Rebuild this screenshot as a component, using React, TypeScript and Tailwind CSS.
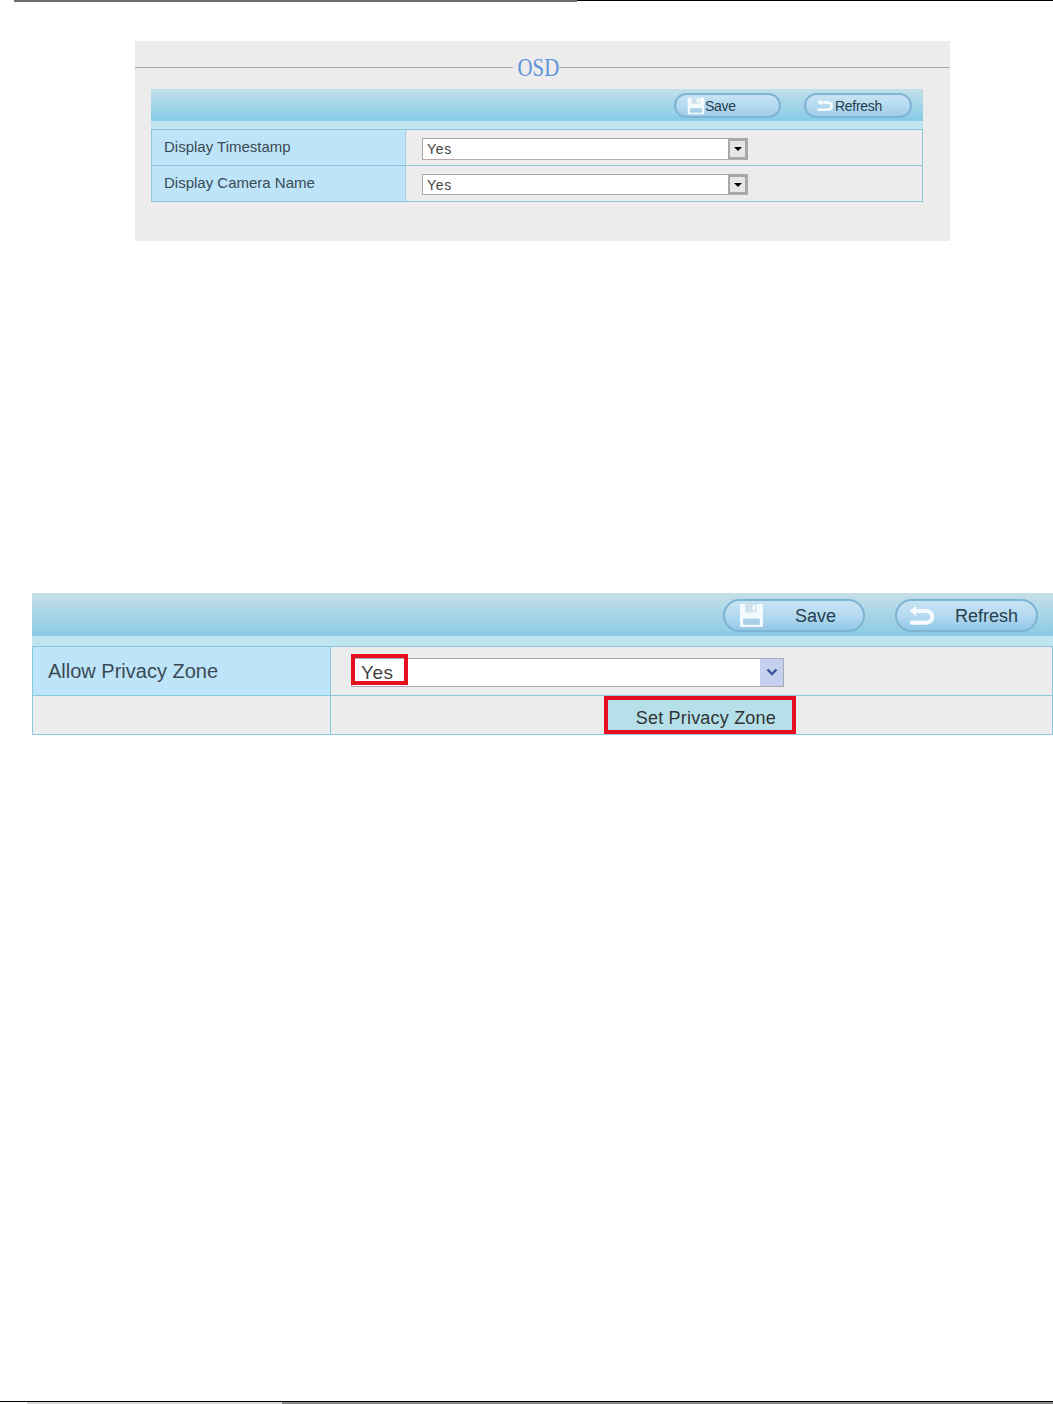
const sans = "font-['Liberation_Sans',Arial,sans-serif]";

function SaveIcon({ className }: { className: string }) {
  return (
    <svg viewBox="0 0 24 24" className={className}>
      <path d="M1 1h22v22H1z" fill="#f4fafd" />
      <path d="M6 1h11v8H6z" fill="#cfe3ee" />
      <path d="M13 2h3v5h-3z" fill="#f4fafd" />
      <path d="M4 15h16v6H4z" fill="#a9cfe4" />
    </svg>
  );
}

function RefreshIcon({ className }: { className: string }) {
  return (
    <svg viewBox="0 0 36 24" fill="none" className={className}>
      <path d="M9 6h15c10 0 10 14 0 14H7" stroke="#f4fafd" strokeWidth="5" strokeLinecap="round" />
      <path d="M12 0 4 6l8 6z" fill="#f4fafd" />
    </svg>
  );
}

function SmallButton({ label, icon, className }: { label: string; icon: React.ReactNode; className: string }) {
  return (
    <div className={`flex h-[25px] items-center rounded-full border-2 border-[#7fb3d3] bg-gradient-to-b from-[#c9e4f3] via-[#b4daf0] to-[#9fcdea] text-[14px] leading-none tracking-[-0.3px] text-[#26404f] ${className}`}>
      {icon}
      <span>{label}</span>
    </div>
  );
}

function LargeButton({ label, icon, className }: { label: string; icon: React.ReactNode; className: string }) {
  return (
    <div className={`flex h-[33px] items-center rounded-full border-2 border-[#7fb3d3] bg-gradient-to-b from-[#c9e4f3] via-[#b4daf0] to-[#93c8e8] text-[18px] leading-none text-[#26404f] ${className}`}>
      {icon}
      <span>{label}</span>
    </div>
  );
}

function SmallSelect({ className }: { className: string }) {
  return (
    <div className={`flex w-[326px] items-stretch border border-[#a9a9a9] border-b-[#b9a9a9] bg-white ${className}`}>
      <span className="flex-1 pl-[4px] text-[14px] leading-[20px] tracking-[0.7px] text-[#444]">Yes</span>
      <div className="flex w-[19px] items-center justify-center border-2 border-[#a8a8a8] bg-[#e6e6e6]">
        <div className="h-0 w-0 border-x-[4px] border-t-[4px] border-x-transparent border-t-black" />
      </div>
    </div>
  );
}

function OsdRow({ label, last }: { label: string; last?: boolean }) {
  return (
    <div className={`flex ${last ? 'h-[35px]' : 'h-[36px] border-b border-[#8cc4da]'}`}>
      <div className="flex w-[254px] items-center border-r border-[#a5d3e6] bg-[#bde4f8] pl-[12px] text-[15px] text-[#3a4a55]">
        {label}
      </div>
      <div className="flex flex-1 items-center pl-[16px] pt-[2px]">
        <SmallSelect className={last ? 'h-[21px]' : 'h-[22px]'} />
      </div>
    </div>
  );
}

function OsdPanel() {
  return (
    <section className="ml-[135px] mt-[39px] h-[200px] w-[815px] bg-[#ececec] px-[16px]">
      <div className="-mx-[16px] flex h-[48px] items-center">
        <div className="mt-[5px] h-[1px] w-[378px] bg-[#a8a8a8]" />
        <span className="w-[46px] scale-x-[0.8] pt-[6px] text-center font-['Liberation_Serif',serif] text-[26px] leading-none text-[#5f93d8]">OSD</span>
        <div className="mt-[5px] h-[1px] flex-1 bg-[#a8a8a8]" />
      </div>
      <div className="flex h-[32px] w-[772px] items-center bg-gradient-to-b from-[#c2dfe9] to-[#84cbe7] pt-[1px]">
        <SmallButton className="ml-[523px] w-[107px] pl-[11px]" label="Save" icon={<SaveIcon className="h-[18px] w-[18px]" />} />
        <SmallButton className="ml-[23px] w-[108px] pl-[9px]" label="Refresh" icon={<RefreshIcon className="mr-[1px] h-[13px] w-[19px]" />} />
      </div>
      <div className="h-[8px] w-[772px] bg-[#bfe5f1]" />
      <div className="w-[772px] border border-[#8cc4da]">
        <OsdRow label="Display Timestamp" />
        <OsdRow label="Display Camera Name" last />
      </div>
    </section>
  );
}

function PrivacyPanel() {
  return (
    <section className="ml-[32px] mt-[352px] w-[1021px]">
      <div className="flex h-[43px] items-center bg-gradient-to-b from-[#c6dfe9] to-[#88cbe3] pt-[2px]">
        <LargeButton className="ml-[691px] w-[142px] pl-[14px]" label="Save" icon={<SaveIcon className="mr-[31px] h-[25px] w-[25px]" />} />
        <LargeButton className="ml-[30px] w-[143px] pl-[9px]" label="Refresh" icon={<RefreshIcon className="mr-[19px] h-[20px] w-[30px]" />} />
      </div>
      <div className="h-[10px] bg-[#bfe5f1]" />
      <div className="border border-[#88c8da]">
        <div className="flex h-[49px] border-b border-[#88c8da]">
          <div className="flex w-[298px] items-center border-r border-[#88c8da] bg-[#bde4f8] pb-[1px] pl-[15px] text-[20px] text-[#3a4a55]">
            Allow Privacy Zone
          </div>
          <div className="flex flex-1 items-center bg-[#ececec] pl-[20px] pt-[2px]">
            <div className="relative flex h-[29px] w-[433px] items-stretch border border-[#a9a9b5] bg-white">
              <span className="flex-1 pl-[9px] pt-[1px] text-[19px] leading-[26px] tracking-[0.5px] text-[#444]">Yes</span>
              <div className="flex w-[23px] items-center justify-center bg-[#c5cff0]">
                <svg viewBox="0 0 12 8" className="h-[8px] w-[12px]" fill="none">
                  <path d="M1.5 1.5 6 6l4.5-4.5" stroke="#3d5596" strokeWidth="2.4" />
                </svg>
              </div>
              <div className="absolute -top-[5px] left-[-1px] h-[31px] w-[57px] border-[4px] border-[#e60f1f]" />
            </div>
          </div>
        </div>
        <div className="flex h-[38px]">
          <div className="w-[298px] border-r border-[#88c8da] bg-[#ececec]" />
          <div className="flex flex-1 bg-[#ececec] pl-[273px]">
            <div className="flex h-[38px] w-[192px] items-center justify-end border-[4px] border-[#e60f1f] bg-[#b5e0ea] pr-[16px] pt-[6px] text-[18px] tracking-[0.2px] text-[#333]">
              Set Privacy Zone
            </div>
          </div>
        </div>
      </div>
    </section>
  );
}

export default function App() {
  return (
    <div className={`flex h-[1404px] w-[1053px] flex-col overflow-hidden bg-white ${sans}`}>
      <div className="flex h-[2px] shrink-0 items-start pl-[14px]">
        <div className="h-[2px] w-[563px] bg-[#6e6e6e]" />
        <div className="h-[1px] flex-1 bg-black" />
      </div>
      <OsdPanel />
      <PrivacyPanel />
      <div className="mt-auto flex h-[3px] shrink-0 flex-col">
        <div className="h-[1px] bg-black" />
        <div className="flex h-[2px]">
          <div className="ml-[27px] h-[2px] w-[255px] bg-[#d8d8d8]" />
          <div className="h-[2px] flex-1 bg-[#8a8a8a]" />
        </div>
      </div>
    </div>
  );
}
